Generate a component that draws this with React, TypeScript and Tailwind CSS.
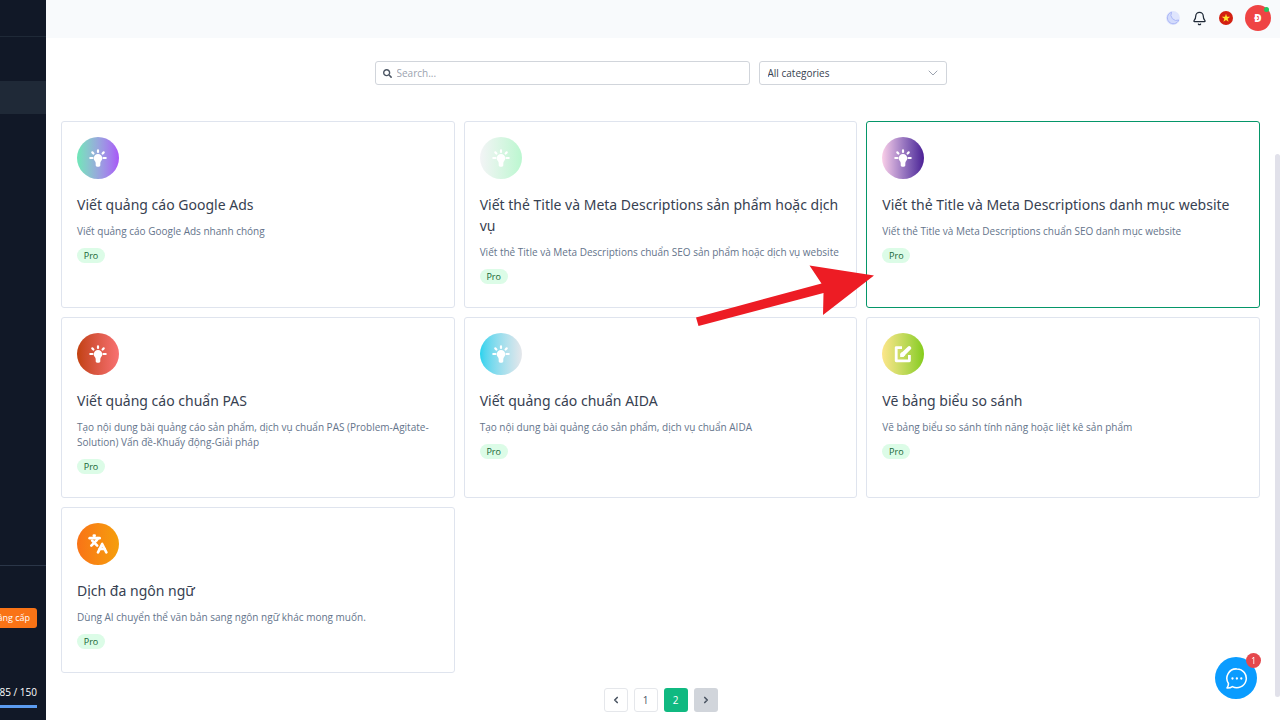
import { ChevronDown, ChevronLeft, ChevronRight, Bell, Languages } from 'lucide-react';
import { FaSearch } from 'react-icons/fa';
import clsx from 'clsx';

const templates = [
  {
    title: 'Viết quảng cáo Google Ads',
    description: 'Viết quảng cáo Google Ads nhanh chóng',
    icon: 'bulb',
    gradient: 'from-[#6ee7b7] to-[#a855f7]',
  },
  {
    title: 'Viết thẻ Title và Meta Descriptions sản phẩm hoặc dịch vụ',
    description: 'Viết thẻ Title và Meta Descriptions chuẩn SEO sản phẩm hoặc dịch vụ website',
    icon: 'bulb',
    gradient: 'from-[#f3f4f6] to-[#bbf7d0]',
  },
  {
    title: 'Viết thẻ Title và Meta Descriptions danh mục website',
    description: 'Viết thẻ Title và Meta Descriptions chuẩn SEO danh mục website',
    icon: 'bulb',
    gradient: 'from-[#fbcfe8] to-[#4c1d95]',
    active: true,
  },
  {
    title: 'Viết quảng cáo chuẩn PAS',
    description:
      'Tạo nội dung bài quảng cáo sản phẩm, dịch vụ chuẩn PAS (Problem-Agitate-Solution) Vấn đề-Khuấy động-Giải pháp',
    icon: 'bulb',
    gradient: 'from-[#c2410c] to-[#f87171]',
  },
  {
    title: 'Viết quảng cáo chuẩn AIDA',
    description: 'Tạo nội dung bài quảng cáo sản phẩm, dịch vụ chuẩn AIDA',
    icon: 'bulb',
    gradient: 'from-[#22d3ee] to-[#e5e7eb]',
  },
  {
    title: 'Vẽ bảng biểu so sánh',
    description: 'Vẽ bảng biểu so sánh tính năng hoặc liệt kê sản phẩm',
    icon: 'edit',
    gradient: 'from-[#fde68a] to-[#84cc16]',
  },
  {
    title: 'Dịch đa ngôn ngữ',
    description: 'Dùng AI chuyển thể văn bản sang ngôn ngữ khác mong muốn.',
    icon: 'translate',
    gradient: 'from-[#f97316] to-[#f59e0b]',
  },
];

function BulbIcon() {
  return (
    <svg viewBox="0 0 18 18" className="size-[18px]" fill="none" stroke="white" strokeLinecap="round">
      <path
        d="M9 5a4.300 4.300 0 0 0-4.300 4.300c0 1.500.8 2.400 1.500 3.200.4.500.5 1.200.5 2v1.800c0 .8.6 1.400 1.400 1.400h1.800c.8 0 1.400-.6 1.400-1.400v-1.800c0-.8.1-1.500.5-2 .7-.8 1.500-1.700 1.500-3.200A4.300 4.300 0 0 0 9 5z"
        fill="white"
        stroke="none"
      />
      <path d="M9 1.400v1.500M3.300 3.400l1.100 1.100M14.700 3.400l-1.100 1.100M1.300 9h2.200M16.700 9h-2.200" strokeWidth="2.200" />
    </svg>
  );
}

function EditIcon() {
  return (
    <svg viewBox="0 0 18 18" className="size-[18px]" fill="none" stroke="white">
      <path d="M8 2.600H2.200v13.200h13.200V10" strokeWidth="2.800" strokeLinejoin="round" />
      <path d="M8.700 9.500l6.500-6.400" strokeWidth="4" strokeLinecap="round" />
      <path d="M6.200 8.700v3.200h3.200l2-2-3.200-3.200z" fill="white" stroke="none" />
    </svg>
  );
}

function TemplateIcon({ name }: { name: string }) {
  if (name === 'edit') return <EditIcon />;
  if (name === 'translate') return <Languages className="size-5 text-white" strokeWidth={3.2} />;
  return <BulbIcon />;
}

// Points from the neighbouring card at the highlighted one
function Pointer() {
  return (
    <svg
      viewBox="0 0 178 62"
      className="pointer-events-none absolute top-[143px] left-[-171px] z-10 h-[62px] w-[178px] max-w-none"
      fill="#ed1c24"
    >
      <path d="M0 52.5L125.5 18.5 113.5.5 178 10.5 127 50 127.5 28 2.5 61z" />
    </svg>
  );
}

function Sidebar() {
  return (
    <aside className="flex h-screen w-[46px] shrink-0 justify-end overflow-hidden bg-[#111827] text-white">
      <div className="flex w-[210px] shrink-0 flex-col">
        <div className="h-[37px] shrink-0 border-b border-[#1f2937]" />
        <nav className="flex-1 pt-11">
          <a href="#" aria-label="Templates" className="block h-[33px] bg-[#1f2937]" />
        </nav>
        <div className="flex h-[155px] flex-col items-end border-t border-[#2b3648] pt-[42px] pr-[9px]">
          <button className="h-[20px] rounded-[3px] bg-[#f97316] px-[7px] text-[9px]">Nâng cấp</button>
          <div className="mt-14 text-[10px] leading-4">85 / 150</div>
          <div className="mt-[5px] h-[3px] w-full bg-[#5b9bf0]" />
        </div>
      </div>
    </aside>
  );
}

function Header() {
  return (
    <header className="flex h-[38px] shrink-0 items-center justify-end bg-[#f8fafc] pr-[9px] pb-0.5">
      <button aria-label="Dark mode">
        <svg viewBox="0 0 14 14" className="size-[14px]" fill="none">
          <circle cx="7" cy="7" r="6.900" fill="#dfe5fd" />
          <path
            d="M5.600 1.200a5.900 5.900 0 1 0 7.200 7.800A5.600 5.600 0 0 1 5.600 1.200z"
            fill="#d3dbfc"
            stroke="#aab6f6"
            strokeWidth="1"
            strokeLinejoin="round"
          />
        </svg>
      </button>
      <button aria-label="Notifications" className="ml-3 text-[#1f2937]">
        <Bell className="size-[15px]" strokeWidth={2} />
      </button>
      <button aria-label="Language" className="ml-3">
        <svg viewBox="0 0 14 14" className="size-[14px]">
          <circle cx="7" cy="7" r="7" fill="#d32011" />
          <path d="M7 2.700l1 3.100h3.200L8.600 7.700l1 3.100L7 8.900l-2.600 1.900 1-3.100-2.600-1.900H6z" fill="#ffe62e" />
        </svg>
      </button>
      <button className="relative ml-3 size-[26px] rounded-full bg-[#ef4444] text-[10px] font-extrabold text-white">
        Đ
        <span className="absolute top-0.5 right-0.5 size-[5px] rounded-full bg-[#22c55e]" />
      </button>
    </header>
  );
}

function Filters() {
  return (
    <div className="flex justify-center gap-[9px]">
      <label className="flex h-6 w-[375px] items-center gap-[5px] rounded-[3px] border border-[#d1d5db] pl-[7px]">
        <FaSearch className="size-[9px] text-[#4b5563]" />
        <input
          type="text"
          aria-label="Search"
          placeholder="Search..."
          className="h-full min-w-0 flex-1 text-[10px] outline-none placeholder:text-[#9ca3af]"
        />
      </label>
      <div className="relative h-6 w-[188px]">
        <select
          aria-label="Category"
          className="block h-6 w-full appearance-none rounded-[3px] border border-[#d1d5db] bg-white pl-2 text-[10px] text-[#374151] outline-none"
        >
          <option>All categories</option>
        </select>
        <ChevronDown className="pointer-events-none absolute top-1 right-1.5 size-4 text-[#9ca3af]" strokeWidth={1.5} />
      </div>
    </div>
  );
}

export default function App() {
  return (
    <div className="flex h-screen overflow-hidden bg-white font-['Open_Sans','Noto_Sans',sans-serif]">
      <Sidebar />
      <div className="flex min-w-0 flex-1 flex-col">
        <Header />
        <main className="flex-1 pt-[23px] pr-5 pl-[15px]">
          <Filters />
          <div className="mt-9 grid grid-cols-3 gap-[9px]">
            {templates.map((item) => (
              <article
                key={item.title}
                className={clsx(
                  'relative rounded-[3px] border px-[15px] pt-[15px] pb-[23px]',
                  item.active ? 'border-[#059669]' : 'border-[#dfe4ee]'
                )}
              >
                <div className={clsx('flex size-[42px] items-center justify-center rounded-full bg-linear-to-r', item.gradient)}>
                  <TemplateIcon name={item.icon} />
                </div>
                <h2 className="mt-[15px] font-['Noto_Sans',sans-serif] text-[14px] leading-[21px] text-[#374151]">{item.title}</h2>
                <p className="mt-[9px] text-[10px] leading-[15px] text-[#64748b]">{item.description}</p>
                <span className="mt-[9px] block h-[15px] w-7 rounded-full bg-[#dcfce7] text-center text-[9px] leading-[15px] font-medium text-[#166534]">
                  Pro
                </span>
                {item.active && <Pointer />}
              </article>
            ))}
          </div>

          {/* Pagination */}
          <nav aria-label="Pagination" className="mt-[15px] flex justify-center gap-1.5 text-[10px] text-[#4b5563]">
            <button aria-label="Previous" className="flex size-6 items-center justify-center rounded-[3px] border border-[#e5e7eb]">
              <ChevronLeft className="size-[10px]" strokeWidth={4} />
            </button>
            <button className="size-6 rounded-[3px] border border-[#e5e7eb]">1</button>
            <button aria-current="page" className="size-6 rounded-[3px] bg-[#10b981] text-white">2</button>
            <button aria-label="Next" className="flex size-6 items-center justify-center rounded-[3px] bg-[#d1d5db]">
              <ChevronRight className="size-[10px]" strokeWidth={4} />
            </button>
          </nav>
        </main>
      </div>

      {/* Scrollbar thumb */}
      <div className="fixed top-[154px] right-0 bottom-[23px] w-[5px] rounded-full bg-[#e1e1ea]" />

      {/* Chat */}
      <button aria-label="Chat" className="fixed right-[23px] bottom-[21px] flex size-[42px] items-center justify-center rounded-full bg-[#0a9cff]">
        <svg viewBox="0 0 24 24" className="size-[23px]" fill="none" stroke="white" strokeWidth="1.600" strokeLinejoin="round">
          <path d="M12.400 2a9.800 9.800 0 1 1-4.700 18.400c-1.400 1-3.400 1.600-5.600 1.500 1-1.300 1.600-2.700 1.500-4.700A9.800 9.800 0 0 1 12.400 2z" />
          <path d="M7.800 12h.01M12.400 12h.01M17 12h.01" strokeWidth="2.400" strokeLinecap="round" />
        </svg>
        <span className="absolute -top-1 -right-1 size-[15px] rounded-full bg-[#e5484d] text-[9px] leading-[15px] text-white">1</span>
      </button>
    </div>
  );
}
